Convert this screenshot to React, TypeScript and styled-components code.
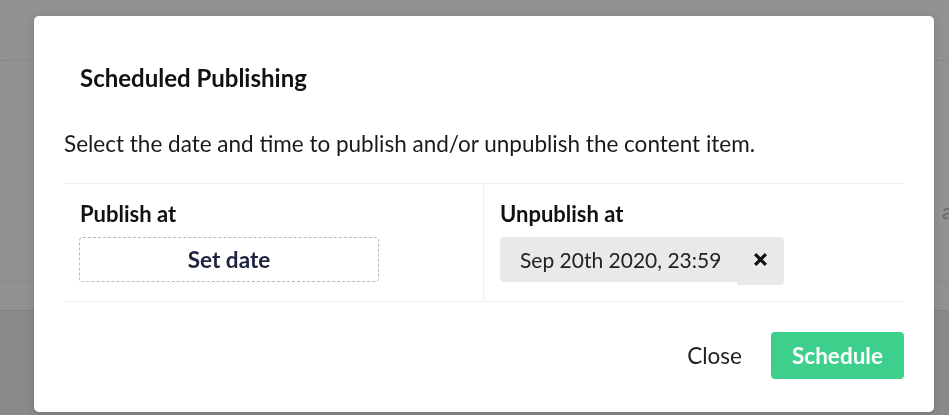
import React from "react";
import styled, { createGlobalStyle } from "styled-components";

const Global = createGlobalStyle`
  html, body { margin: 0; padding: 0; }
  body {
    font-family: Lato, "Noto Sans", sans-serif;
    background: #ffffff;
    width: 949px;
    height: 415px;
    overflow: hidden;
  }
`;

const Page = styled.div`
  width: 949px;
  height: 415px;
  display: flex;
  flex-direction: column;
`;

const PageHeader = styled.div`
  height: 60px;
  border-bottom: 1px dashed #e4e4e4;
`;

const PageBody = styled.div`
  height: 221px;
  display: flex;
  justify-content: flex-end;
  align-items: flex-start;
  box-sizing: border-box;
  padding-top: 136px;
  border-bottom: 1px solid #efefef;
  color: #b8b8b8;
  font-size: 22px;
  margin-right: -4px;
`;

const PageGap = styled.div`
  height: 28px;
`;

const PageFooter = styled.div`
  flex: 1;
  background: #f1f1f1;
  border-top: 1px solid #e2e2e2;
`;

const Backdrop = styled.div`
  position: fixed;
  inset: 0;
  background: rgba(0, 0, 0, 0.43);
  padding: 16px 0 0 34px;
`;

const Modal = styled.div`
  width: 900px;
  height: 396px;
  box-sizing: border-box;
  background: #ffffff;
  border-radius: 5px;
  padding: 0 30px;
  display: flex;
  flex-direction: column;
  box-shadow: 0 2px 10px rgba(0, 0, 0, 0.15);
`;

const Title = styled.h2`
  margin: 0;
  padding: 47px 16px 0;
  font-size: 24px;
  font-weight: 700;
  line-height: 29px;
  color: #111;
`;

const Description = styled.p`
  margin: 0;
  padding: 38px 0 26px;
  font-size: 22.5px;
  line-height: 27px;
  color: #1a1a1a;
`;

const Table = styled.div`
  display: grid;
  grid-template-columns: 419px 1fr;
  grid-template-rows: 117px;
  border-top: 1px solid #eeeeee;
  border-bottom: 1px solid #eeeeee;
`;

const Cell = styled.div<{ $divider?: boolean }>`
  padding: 17px 16px 0;
  display: flex;
  flex-direction: column;
  gap: 10px;
  border-left: ${(p) => (p.$divider ? "1px solid #eeeeee" : "none")};
`;

const Label = styled.div`
  font-size: 22px;
  font-weight: 700;
  line-height: 26px;
  color: #111;
`;

const DashedButton = styled.button`
  width: 300px;
  height: 45px;
  margin-left: -1px;
  box-sizing: border-box;
  border: 1px dashed #b9b9b9;
  border-radius: 4px;
  background: #fff;
  font-family: inherit;
  font-size: 22.5px;
  font-weight: 700;
  color: #1e2440;
  cursor: pointer;
`;

const Chip = styled.div`
  display: flex;
  align-items: flex-start;
  width: 284px;
`;

const ChipText = styled.div`
  flex: 1;
  height: 45px;
  display: flex;
  align-items: center;
  padding-left: 20px;
  background: #e9e9ec;
  border-radius: 4px 0 0 4px;
  font-size: 21px;
  color: #222;
`;

const ChipClear = styled.button`
  width: 47px;
  height: 48px;
  border: none;
  background: #e9e9ec;
  border-radius: 0 4px 4px 0;
  display: flex;
  align-items: center;
  justify-content: center;
  padding: 0 0 3px;
  cursor: pointer;
`;

const Footer = styled.div`
  display: flex;
  justify-content: flex-end;
  align-items: center;
  gap: 29px;
  padding-top: 30px;
`;

const TextButton = styled.button`
  border: none;
  background: none;
  font-family: inherit;
  font-size: 22.5px;
  color: #222;
  padding: 0;
  cursor: pointer;
`;

const PrimaryButton = styled.button`
  width: 133px;
  height: 47px;
  border: none;
  border-radius: 4px;
  background: #3dcf8c;
  color: #fff;
  font-family: inherit;
  font-size: 22.5px;
  font-weight: 700;
  cursor: pointer;
`;

export default function App() {
  return (
    <>
      <Global />
      <Page>
        <PageHeader />
        <PageBody>a</PageBody>
        <PageGap />
        <PageFooter />
      </Page>
      <Backdrop>
        <Modal>
          <Title>Scheduled Publishing</Title>
          <Description>
            Select the date and time to publish and/or unpublish the content item.
          </Description>
          <Table>
            <Cell>
              <Label>Publish at</Label>
              <DashedButton>Set date</DashedButton>
            </Cell>
            <Cell $divider>
              <Label>Unpublish at</Label>
              <Chip>
                <ChipText>Sep 20th 2020, 23:59</ChipText>
                <ChipClear aria-label="Clear">
                  <svg width="15" height="15" viewBox="0 0 14 14">
                    <path d="M2 2 L12 12 M12 2 L2 12" stroke="#111" strokeWidth="3" strokeLinecap="butt" />
                  </svg>
                </ChipClear>
              </Chip>
            </Cell>
          </Table>
          <Footer>
            <TextButton>Close</TextButton>
            <PrimaryButton>Schedule</PrimaryButton>
          </Footer>
        </Modal>
      </Backdrop>
    </>
  );
}
